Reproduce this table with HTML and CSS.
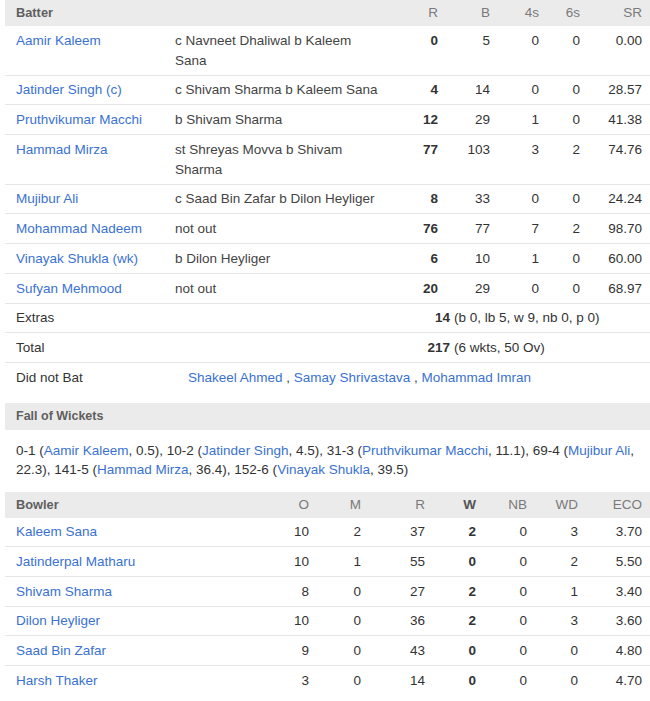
FILE: index.html
```html
<!DOCTYPE html>
<html lang="en">
<head>
<meta charset="utf-8">
<title>Scorecard</title>
<link rel="stylesheet" href="styles.css">
</head>
<body>
<div class="card">
  <table class="bat">
    <colgroup>
      <col class="c-name"><col class="c-dis"><col class="c-r"><col class="c-b"><col class="c-4s"><col class="c-6s"><col class="c-sr">
    </colgroup>
    <thead>
      <tr><th class="hl">Batter</th><th></th><th>R</th><th>B</th><th>4s</th><th>6s</th><th>SR</th></tr>
    </thead>
    <tbody>
      <tr><td><a>Aamir Kaleem</a></td><td class="dis">c Navneet Dhaliwal b Kaleem Sana</td><td class="b">0</td><td>5</td><td>0</td><td>0</td><td>0.00</td></tr>
      <tr><td><a>Jatinder Singh (c)</a></td><td class="dis">c Shivam Sharma b Kaleem Sana</td><td class="b">4</td><td>14</td><td>0</td><td>0</td><td>28.57</td></tr>
      <tr><td><a>Pruthvikumar Macchi</a></td><td class="dis">b Shivam Sharma</td><td class="b">12</td><td>29</td><td>1</td><td>0</td><td>41.38</td></tr>
      <tr><td><a>Hammad Mirza</a></td><td class="dis">st Shreyas Movva b Shivam Sharma</td><td class="b">77</td><td>103</td><td>3</td><td>2</td><td>74.76</td></tr>
      <tr><td><a>Mujibur Ali</a></td><td class="dis">c Saad Bin Zafar b Dilon Heyliger</td><td class="b">8</td><td>33</td><td>0</td><td>0</td><td>24.24</td></tr>
      <tr><td><a>Mohammad Nadeem</a></td><td class="dis">not out</td><td class="b">76</td><td>77</td><td>7</td><td>2</td><td>98.70</td></tr>
      <tr><td><a>Vinayak Shukla (wk)</a></td><td class="dis">b Dilon Heyliger</td><td class="b">6</td><td>10</td><td>1</td><td>0</td><td>60.00</td></tr>
      <tr><td><a>Sufyan Mehmood</a></td><td class="dis">not out</td><td class="b">20</td><td>29</td><td>0</td><td>0</td><td>68.97</td></tr>
    </tbody>
  </table>

  <div class="sum">
    <span class="sum-label">Extras</span>
    <span class="sum-num">14</span>
    <span class="sum-det">(b 0, lb 5, w 9, nb 0, p 0)</span>
  </div>
  <div class="sum">
    <span class="sum-label">Total</span>
    <span class="sum-num">217</span>
    <span class="sum-det">(6 wkts, 50 Ov)</span>
  </div>
  <div class="sum last">
    <span class="dnb-label">Did not Bat</span>
    <span class="dnb"><a>Shakeel Ahmed</a> , <a>Samay Shrivastava</a> , <a>Mohammad Imran</a></span>
  </div>

  <div class="sec-head">Fall of Wickets</div>
  <p class="fow">0-1 (<a>Aamir Kaleem</a>, 0.5), 10-2 (<a>Jatinder Singh</a>, 4.5), 31-3 (<a>Pruthvikumar Macchi</a>, 11.1), 69-4 (<a>Mujibur Ali</a>, 22.3), 141-5 (<a>Hammad Mirza</a>, 36.4), 152-6 (<a>Vinayak Shukla</a>, 39.5)</p>

  <table class="bowl">
    <colgroup>
      <col class="k-name"><col class="k-o"><col class="k-m"><col class="k-r"><col class="k-w"><col class="k-nb"><col class="k-wd"><col class="k-eco">
    </colgroup>
    <thead>
      <tr><th class="hl">Bowler</th><th>O</th><th>M</th><th>R</th><th class="hw">W</th><th>NB</th><th>WD</th><th>ECO</th></tr>
    </thead>
    <tbody>
      <tr><td><a>Kaleem Sana</a></td><td>10</td><td>2</td><td>37</td><td class="b">2</td><td>0</td><td>3</td><td>3.70</td></tr>
      <tr><td><a>Jatinderpal Matharu</a></td><td>10</td><td>1</td><td>55</td><td class="b">0</td><td>0</td><td>2</td><td>5.50</td></tr>
      <tr><td><a>Shivam Sharma</a></td><td>8</td><td>0</td><td>27</td><td class="b">2</td><td>0</td><td>1</td><td>3.40</td></tr>
      <tr><td><a>Dilon Heyliger</a></td><td>10</td><td>0</td><td>36</td><td class="b">2</td><td>0</td><td>3</td><td>3.60</td></tr>
      <tr><td><a>Saad Bin Zafar</a></td><td>9</td><td>0</td><td>43</td><td class="b">0</td><td>0</td><td>0</td><td>4.80</td></tr>
      <tr><td><a>Harsh Thaker</a></td><td>3</td><td>0</td><td>14</td><td class="b">0</td><td>0</td><td>0</td><td>4.70</td></tr>
    </tbody>
  </table>
</div>
</body>
</html>
```

FILE: styles.css
```css
* { box-sizing: border-box; }

html, body {
  margin: 0;
  padding: 0;
  background: #fff;
}

body {
  font-family: "Liberation Sans", Arial, sans-serif;
  font-size: 13.5px;
  color: #333;
}

a {
  color: #3a72d2;
  text-decoration: none;
}

.card {
  width: 645px;
  margin-left: 5px;
}

table {
  width: 645px;
  border-collapse: collapse;
  table-layout: fixed;
}

th {
  background: #ebebeb;
  color: #7a7a7a;
  font-weight: normal;
  text-align: right;
  line-height: 20px;
  padding: 3px 8px 3px 0;
  height: 26px;
}

th.hl {
  text-align: left;
  padding-left: 11px;
  color: #5f5f5f;
  font-weight: bold;
  font-size: 12.8px;
}

th.hw {
  color: #555;
  font-weight: bold;
}

td {
  vertical-align: top;
  text-align: right;
  line-height: 20px;
  padding: 4.7px 8px 4px 0;
  border-bottom: 1px solid #e6e6e6;
}

td:first-child {
  text-align: left;
  padding-left: 11px;
}

td.dis {
  text-align: left;
  padding-left: 8px;
  color: #444;
}

td.b { font-weight: bold; }

.c-name { width: 162px; }
.c-dis { width: 223px; }
.c-r { width: 56px; }
.c-b { width: 52px; }
.c-4s { width: 49px; }
.c-6s { width: 41px; }
.c-sr { width: 62px; }

.sum {
  display: flex;
  line-height: 20px;
  padding: 4.7px 0 4px;
  border-bottom: 1px solid #e6e6e6;
}

.sum.last { border-bottom: none; }

.sum-label {
  width: 385px;
  padding-left: 11px;
}

.sum-num {
  width: 60px;
  text-align: right;
  font-weight: bold;
}

.sum-det {
  padding-left: 4px;
}

.dnb-label {
  width: 183px;
  padding-left: 11px;
}

.dnb { color: #444; }

.sec-head {
  margin-top: 11px;
  background: #ebebeb;
  color: #5f5f5f;
  font-weight: bold;
  font-size: 12.5px;
  line-height: 20px;
  padding: 3px 11px 4px;
}

.fow {
  margin: 0;
  padding: 11px 11px 12px;
  line-height: 19.5px;
}

.bowl tbody tr:last-child td { border-bottom: none; }

.k-name { width: 252px; }
.k-o { width: 60px; }
.k-m { width: 52px; }
.k-r { width: 64px; }
.k-w { width: 51px; }
.k-nb { width: 51px; }
.k-wd { width: 51px; }
.k-eco { width: 64px; }
```
